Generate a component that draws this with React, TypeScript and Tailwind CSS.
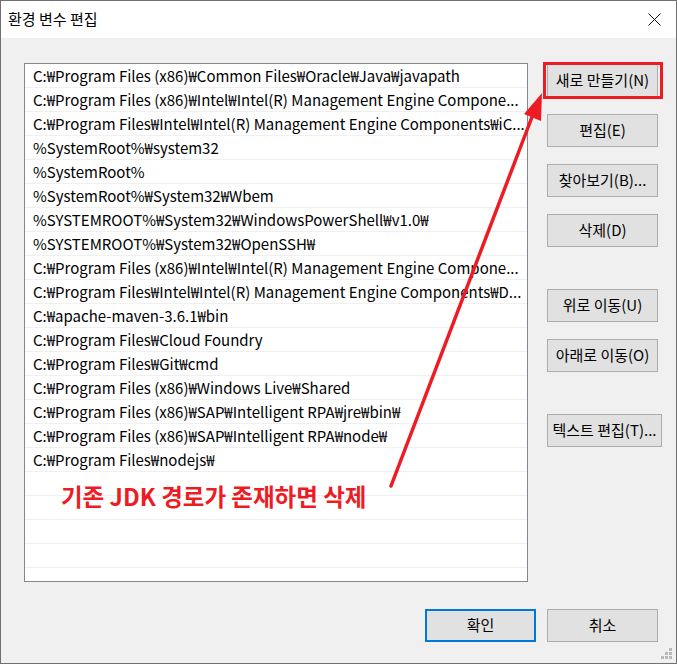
import React from "react";

const paths = [
  "C:₩Program Files (x86)₩Common Files₩Oracle₩Java₩javapath",
  "C:₩Program Files (x86)₩Intel₩Intel(R) Management Engine Compone...",
  "C:₩Program Files₩Intel₩Intel(R) Management Engine Components₩iC...",
  "%SystemRoot%₩system32",
  "%SystemRoot%",
  "%SystemRoot%₩System32₩Wbem",
  "%SYSTEMROOT%₩System32₩WindowsPowerShell₩v1.0₩",
  "%SYSTEMROOT%₩System32₩OpenSSH₩",
  "C:₩Program Files (x86)₩Intel₩Intel(R) Management Engine Compone...",
  "C:₩Program Files₩Intel₩Intel(R) Management Engine Components₩D...",
  "C:₩apache-maven-3.6.1₩bin",
  "C:₩Program Files₩Cloud Foundry",
  "C:₩Program Files₩Git₩cmd",
  "C:₩Program Files (x86)₩Windows Live₩Shared",
  "C:₩Program Files (x86)₩SAP₩Intelligent RPA₩jre₩bin₩",
  "C:₩Program Files (x86)₩SAP₩Intelligent RPA₩node₩",
  "C:₩Program Files₩nodejs₩",
];

const rows = [...paths, ...Array(6).fill("")];

function Btn({ label, className = "" }: { label: string; className?: string }) {
  return (
    <button
      className={`h-[33px] w-[111px] border border-[#adadad] bg-[#e1e1e1] text-[15px] text-black whitespace-nowrap ${className}`}
    >
      {label}
    </button>
  );
}

export default function App() {
  return (
    <div
      className="relative w-[677px] h-[664px] border border-[#707070] bg-[#f0f0f0] overflow-hidden flex flex-col"
      style={{ fontFamily: '"Noto Sans CJK KR", "Noto Sans", sans-serif' }}
    >
      {/* title bar */}
      <div className="h-[37px] bg-white flex items-center justify-between pl-[7px] pr-[15px] shrink-0">
        <span className="text-[15px] text-black">환경 변수 편집</span>
        <svg width="13" height="13" viewBox="0 0 13 13">
          <path d="M0.5 0.5 L12.5 12.5 M12.5 0.5 L0.5 12.5" stroke="#111" strokeWidth="1" />
        </svg>
      </div>

      {/* body */}
      <div className="flex pl-[23px] pt-[25px] gap-[19px]">
        <div className="w-[504px] h-[519px] border border-[#828790] bg-white overflow-hidden">
          {rows.map((p, i) => (
            <div
              key={i}
              className="h-[24px] border-b border-[#f0f0f0] pl-[8px] pt-[2px] flex items-center text-[15px] text-black whitespace-nowrap overflow-hidden"
            >
              {p}
            </div>
          ))}
        </div>

        <div className="flex flex-col pt-[1px]">
          <div className="relative">
            <Btn label="새로 만들기(N)" />
            <span className="absolute left-[-4px] right-[-1px] top-[-2px] bottom-[-2px] border-[3px] border-[#ed1c24]" />
          </div>
          <Btn label="편집(E)" className="mt-[17px]" />
          <Btn label="찾아보기(B)..." className="mt-[17px]" />
          <Btn label="삭제(D)" className="mt-[17px]" />
          <Btn label="위로 이동(U)" className="mt-[42px]" />
          <Btn label="아래로 이동(O)" className="mt-[17px]" />
          <Btn label="텍스트 편집(T)..." className="mt-[42px] w-[115px]" />
        </div>
      </div>

      {/* footer */}
      <div className="flex justify-end gap-[11px] pr-[18px] mt-[27px]">
        <button className="h-[33px] w-[111px] border-2 border-[#0078d7] bg-[#e1e1e1] text-[15px] text-black">
          확인
        </button>
        <button className="h-[33px] w-[111px] border border-[#adadad] bg-[#e1e1e1] text-[15px] text-black">
          취소
        </button>
      </div>

      {/* resize grip */}
      <svg className="absolute right-[3px] bottom-[3px]" width="12" height="12" viewBox="0 0 12 12">
        <g fill="#b9b9b9">
          <rect x="8" y="0" width="3" height="3" />
          <rect x="4" y="4" width="3" height="3" />
          <rect x="8" y="4" width="3" height="3" />
          <rect x="0" y="8" width="3" height="3" />
          <rect x="4" y="8" width="3" height="3" />
          <rect x="8" y="8" width="3" height="3" />
        </g>
      </svg>

      {/* annotation */}
      <span className="absolute left-[60px] top-[478px] text-[23.5px] font-bold text-[#ed1c24] whitespace-nowrap">
        기존 JDK 경로가 존재하면 삭제
      </span>
      <svg className="absolute left-0 top-0 pointer-events-none" width="677" height="664">
        <line x1="390" y1="485" x2="531" y2="116" stroke="#ed1c24" strokeWidth="3.5" strokeLinecap="round" />
        <polygon points="541,92 540,120 523,113" fill="#ed1c24" />
      </svg>
    </div>
  );
}
